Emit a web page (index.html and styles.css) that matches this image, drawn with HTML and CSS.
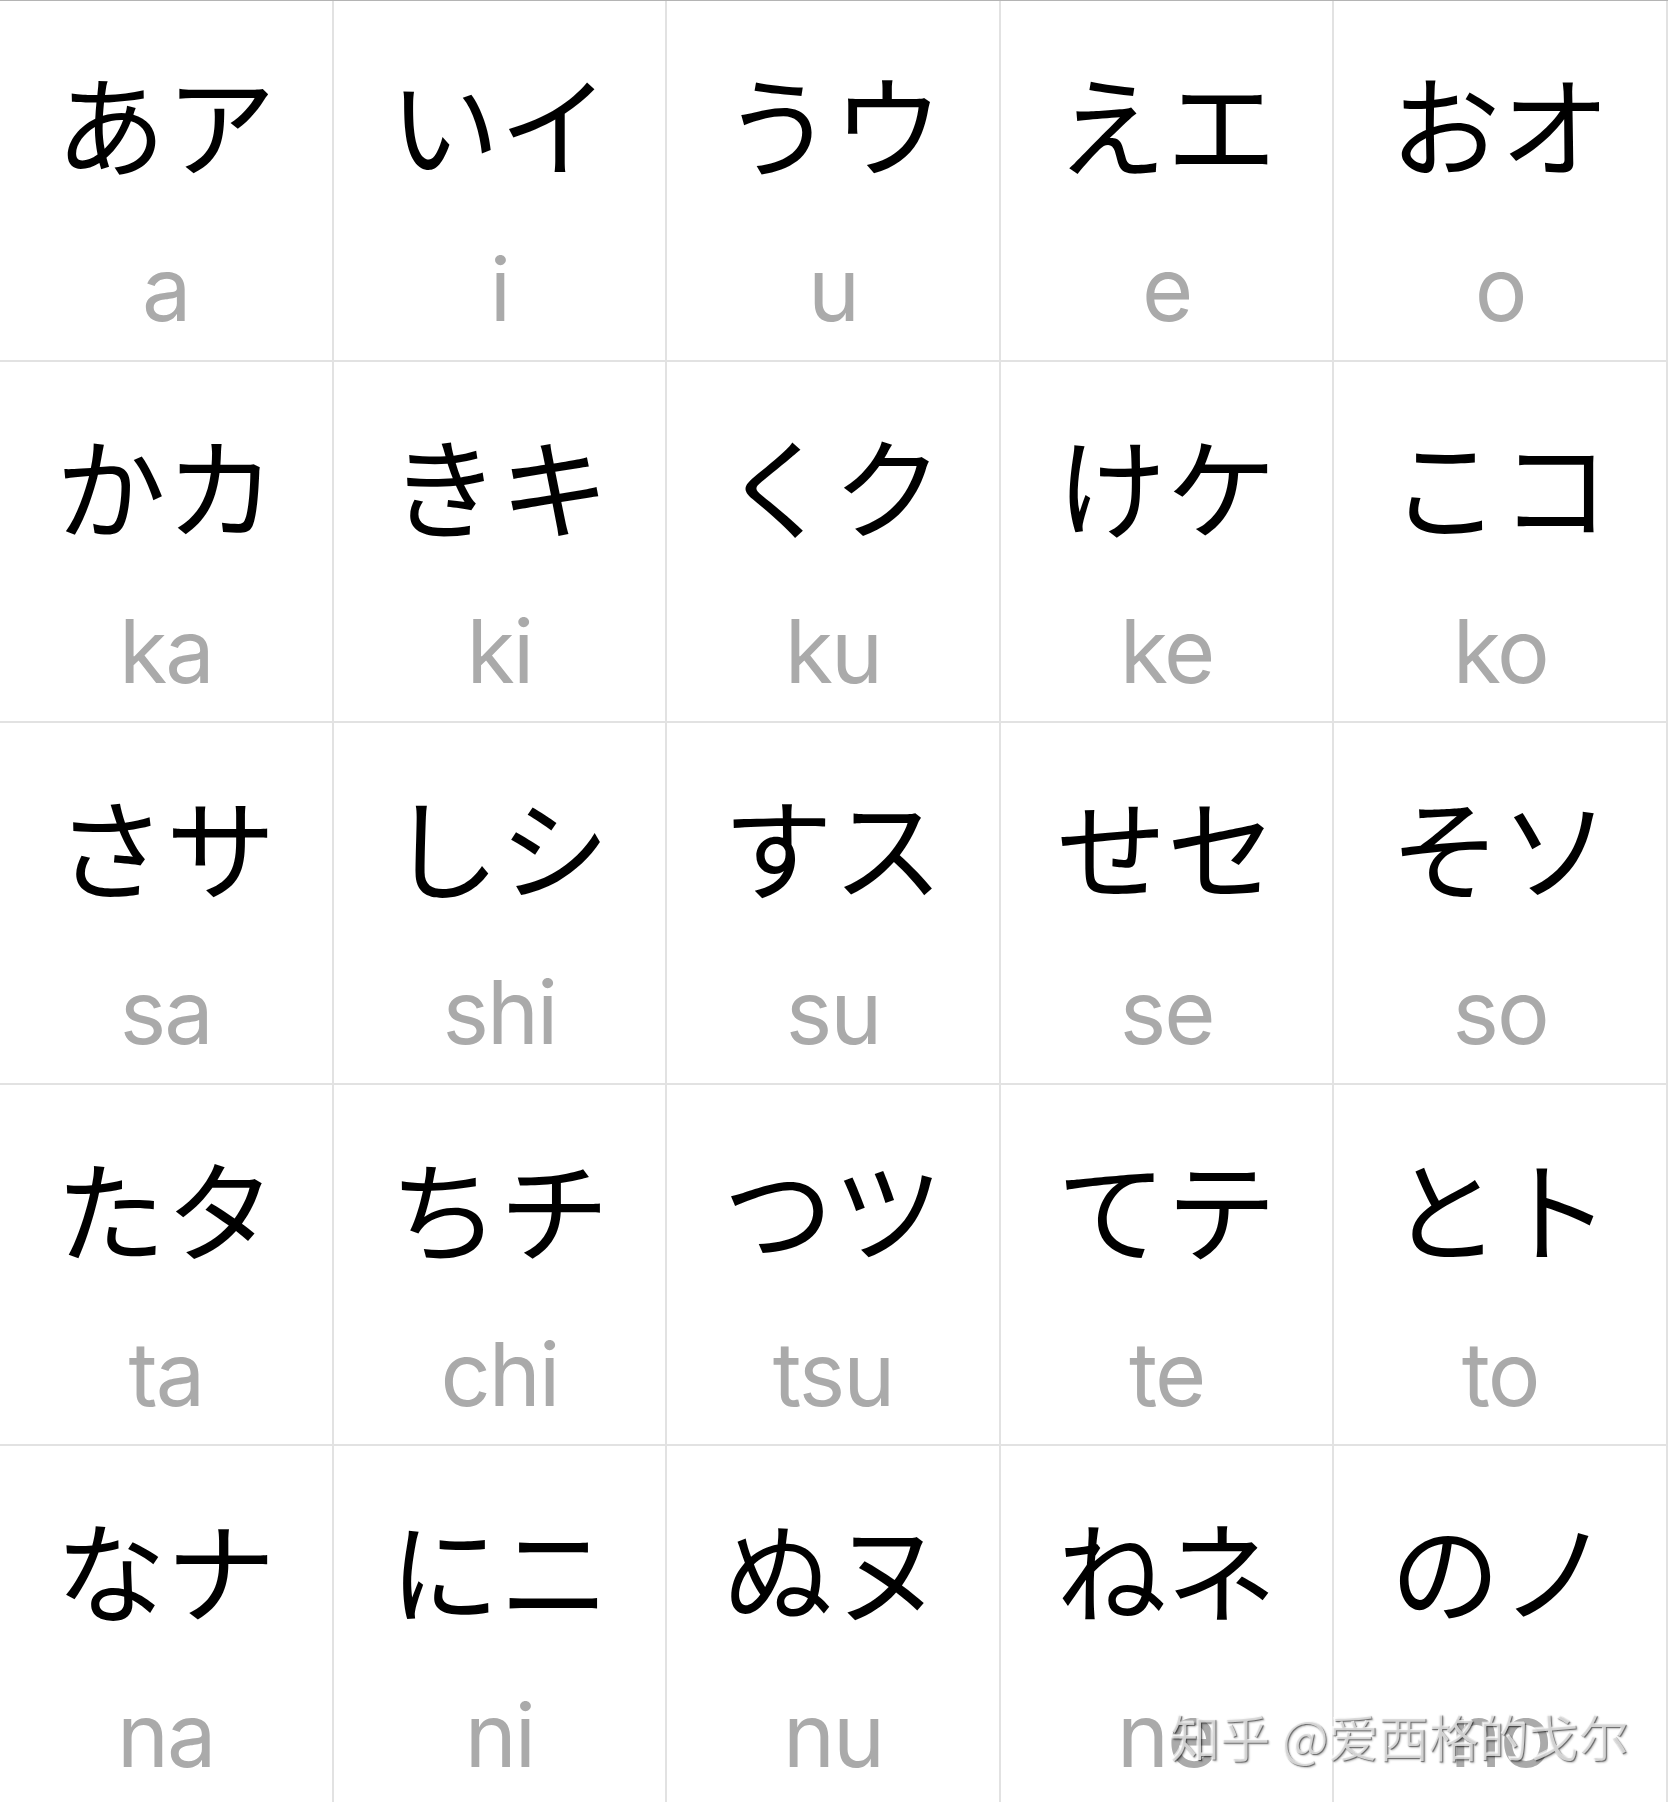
FILE: index.html
```html
<!DOCTYPE html>
<html lang="ja">
<head>
<meta charset="utf-8">
<title>Kana</title>
<link rel="stylesheet" href="styles.css">
</head>
<body>
<div class="page">
  <div class="grid">
    <div class="cell"><div class="kana">あア</div><div class="roma">a</div></div>
    <div class="cell"><div class="kana">いイ</div><div class="roma">i</div></div>
    <div class="cell"><div class="kana">うウ</div><div class="roma">u</div></div>
    <div class="cell"><div class="kana">えエ</div><div class="roma">e</div></div>
    <div class="cell"><div class="kana">おオ</div><div class="roma">o</div></div>

    <div class="cell"><div class="kana">かカ</div><div class="roma">ka</div></div>
    <div class="cell"><div class="kana">きキ</div><div class="roma">ki</div></div>
    <div class="cell"><div class="kana">くク</div><div class="roma">ku</div></div>
    <div class="cell"><div class="kana">けケ</div><div class="roma">ke</div></div>
    <div class="cell"><div class="kana">こコ</div><div class="roma">ko</div></div>

    <div class="cell"><div class="kana">さサ</div><div class="roma">sa</div></div>
    <div class="cell"><div class="kana">しシ</div><div class="roma">shi</div></div>
    <div class="cell"><div class="kana">すス</div><div class="roma">su</div></div>
    <div class="cell"><div class="kana">せセ</div><div class="roma">se</div></div>
    <div class="cell"><div class="kana">そソ</div><div class="roma">so</div></div>

    <div class="cell"><div class="kana">たタ</div><div class="roma">ta</div></div>
    <div class="cell"><div class="kana">ちチ</div><div class="roma">chi</div></div>
    <div class="cell"><div class="kana">つツ</div><div class="roma">tsu</div></div>
    <div class="cell"><div class="kana">てテ</div><div class="roma">te</div></div>
    <div class="cell"><div class="kana">とト</div><div class="roma">to</div></div>

    <div class="cell"><div class="kana">なナ</div><div class="roma">na</div></div>
    <div class="cell"><div class="kana">にニ</div><div class="roma">ni</div></div>
    <div class="cell"><div class="kana">ぬヌ</div><div class="roma">nu</div></div>
    <div class="cell"><div class="kana">ねネ</div><div class="roma">ne</div></div>
    <div class="cell"><div class="kana">のノ</div><div class="roma">no</div></div>
  </div>
  <div class="watermark">知乎 @爱西格的戈尔</div>
</div>
</body>
</html>
```

FILE: styles.css
```css
html, body {
  margin: 0;
  padding: 0;
  background: #ffffff;
}

body {
  width: 1668px;
  height: 1802px;
  overflow: hidden;
}

.page {
  position: relative;
  width: 1668px;
  height: 1802px;
  overflow: hidden;
  border-top: 1px solid #b4b4b4;
  box-sizing: border-box;
}

.grid {
  display: grid;
  grid-template-columns: repeat(5, 333.6px);
  grid-auto-rows: 361.6px;
  margin-top: -1px;
}

.cell {
  display: flex;
  flex-direction: column;
  align-items: center;
  border-right: 2px solid #e2e2e2;
  border-bottom: 2px solid #e2e2e2;
  box-sizing: border-box;
}

.kana {
  margin-top: 66px;
  font-family: "Noto Sans CJK JP", sans-serif;
  font-size: 110px;
  line-height: 110px;
  color: #000000;
  white-space: nowrap;
}

.roma {
  margin-top: 69px;
  font-family: Inter, "Liberation Sans", sans-serif;
  font-size: 88px;
  line-height: 88px;
  letter-spacing: -2px;
  color: #aaaaaa;
  white-space: nowrap;
}

.watermark {
  position: absolute;
  left: 1170px;
  top: 1703px;
  font-family: "Noto Sans CJK SC", sans-serif;
  font-size: 50px;
  line-height: 62px;
  color: rgba(255, 255, 255, 0.7);
  text-shadow: 1px 1px 1px rgba(0, 0, 0, 0.5), 2px 2px 2px rgba(0, 0, 0, 0.2), -1px -1px 0 rgba(255, 255, 255, 0.6);
  white-space: nowrap;
}
```
